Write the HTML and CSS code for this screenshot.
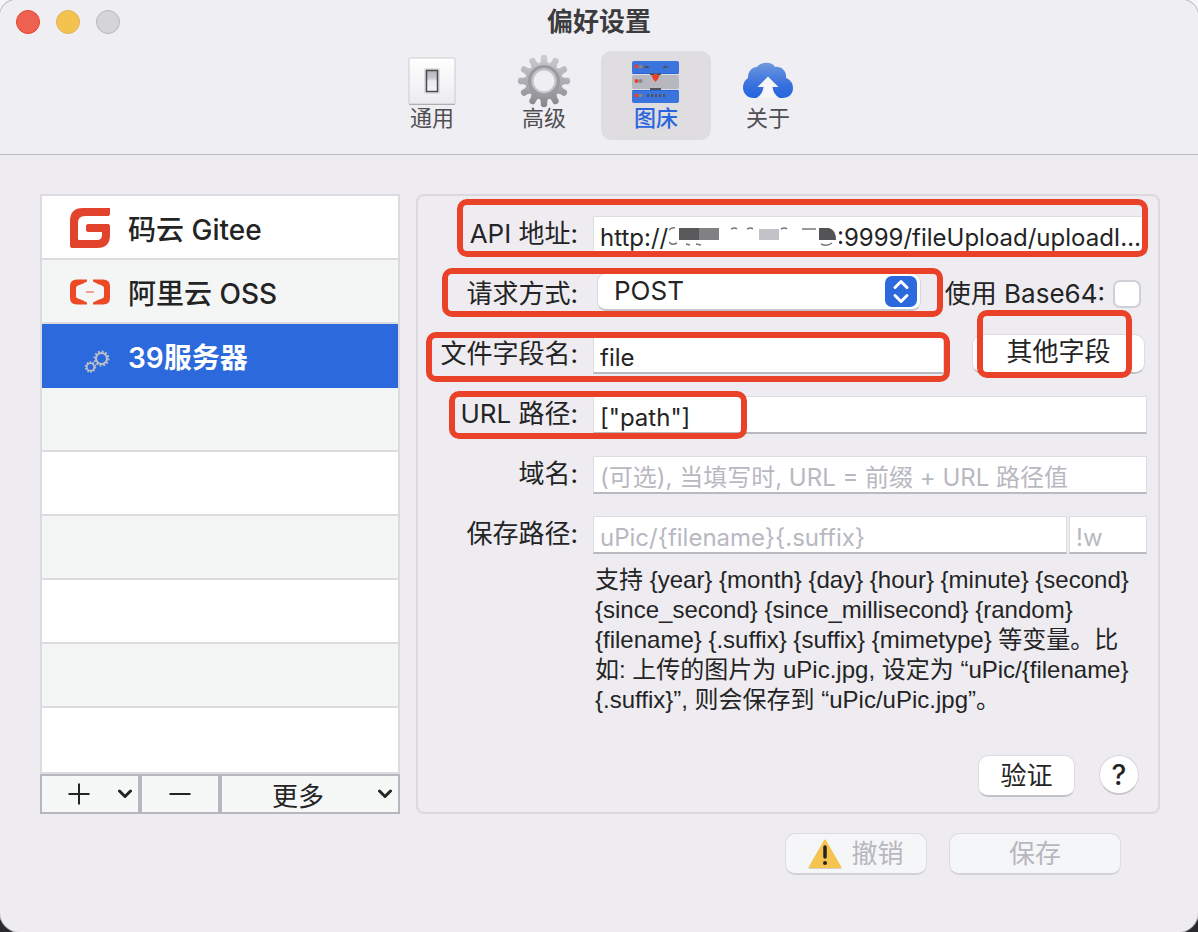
FILE: index.html
```html
<!DOCTYPE html>
<html lang="zh-CN">
<head>
<meta charset="utf-8">
<title>偏好设置</title>
<link rel="stylesheet" href="styles.css">
</head>
<body>
<div class="window">
  <header class="titlebar">
    <div class="lights">
      <button class="light light-close" aria-label="关闭"></button>
      <button class="light light-min" aria-label="最小化"></button>
      <button class="light light-zoom" aria-label="缩放" disabled></button>
    </div>
    <h1 class="title">偏好设置</h1>
    <nav class="tabs">
      <button class="tab">
        <svg class="tab-icon" viewBox="0 0 54 54">
          <defs>
            <linearGradient id="plate" x1="0" y1="0" x2="0" y2="1"><stop offset="0" stop-color="#fff"/><stop offset="1" stop-color="#ecebef"/></linearGradient>
            <linearGradient id="rocker" x1="0" y1="0" x2="0" y2="1"><stop offset="0" stop-color="#b4b5bc"/><stop offset=".35" stop-color="#c6c6cb"/><stop offset=".5" stop-color="#ecebef"/><stop offset="1" stop-color="#f4f4f6"/></linearGradient>
          </defs>
          <rect x="4" y="4" width="46" height="46" rx="1" fill="url(#plate)" stroke="#cbcacf"/>
          <path d="M4 50.500h46" stroke="#aeaeb5"/>
          <rect x="19" y="14" width="16" height="26" rx="2" fill="#dddce0"/>
          <rect x="21.500" y="16.500" width="11" height="21" fill="url(#rocker)" stroke="#4a4a4c" stroke-width="1.500"/>
        </svg>
        <span>通用</span>
      </button>
      <button class="tab">
        <svg class="tab-icon" viewBox="0 0 54 54">
          <defs>
            <linearGradient id="steel" gradientUnits="userSpaceOnUse" x1="0" y1="0" x2="0" y2="54"><stop offset="0" stop-color="#cfced3"/><stop offset=".55" stop-color="#aaaab0"/><stop offset="1" stop-color="#838387"/></linearGradient>
            <g id="teeth">
              <path id="tooth" d="M22 11 23.800 6.500V3Q24.200 .8 27 .8T30.200 3V6.500L32 11z"/>
              <use href="#tooth" transform="rotate(30 27 27)"/><use href="#tooth" transform="rotate(60 27 27)"/>
            </g>
            <mask id="gearmask">
              <g fill="#fff"><use href="#teeth"/><use href="#teeth" transform="rotate(90 27 27)"/><use href="#teeth" transform="rotate(180 27 27)"/><use href="#teeth" transform="rotate(270 27 27)"/><circle cx="27" cy="27" r="18.500"/></g>
              <circle cx="27" cy="27" r="11" fill="#000"/>
            </mask>
          </defs>
          <rect width="54" height="54" fill="url(#steel)" mask="url(#gearmask)"/>
          <circle cx="27" cy="27" r="14.500" fill="none" stroke="#9a9a9f" stroke-width="3"/>
          <circle cx="27" cy="27" r="11.500" fill="none" stroke="#c4c3c9" stroke-width="2"/>
        </svg>
        <span>高级</span>
      </button>
      <button class="tab tab-active" aria-current="page">
        <svg class="tab-icon" viewBox="0 0 54 54">
          <rect x="3" y="7" width="47" height="13" rx="2" fill="#3a74dc"/>
          <rect x="3" y="21" width="47" height="14" rx="2" fill="#b7b7c0"/>
          <rect x="3" y="36" width="47" height="13" rx="2" fill="#3a74dc"/>
          <path d="M3.500 19.500h46M3.500 36.500h46" stroke="#2965dc"/>
          <g fill="#ea4127"><circle cx="7.500" cy="12.500" r="2"/><circle cx="7.500" cy="27" r="2"/><circle cx="7.500" cy="41.500" r="2"/><path d="M22 20h9l-2 5-2.500 3-2.500-3z"/></g>
          <g fill="#858589"><circle cx="11.500" cy="12.500" r="2"/><circle cx="11.500" cy="27" r="2"/><circle cx="11.500" cy="41.500" r="2"/></g>
          <g fill="#525356"><path d="M15 13q3-2.500 5 0v1h-5zM34 13q2.500-2.500 4.500 0v1H34zM21 19h4v2h-4zM28 19h4v2h-4zM21 34h11v2H21zM18 40h2v3h-2zM22 40h2v3h-2zM26 40h2v3h-2zM30 40h2v3h-2zM34 40h2v3h-2z"/></g>
        </svg>
        <span>图床</span>
      </button>
      <button class="tab">
        <svg class="tab-icon" viewBox="0 0 54 54">
          <defs><linearGradient id="cloud" x1="0" y1="0" x2="0" y2="1"><stop offset="0" stop-color="#6f98dd"/><stop offset=".6" stop-color="#3a71dd"/><stop offset="1" stop-color="#2366e2"/></linearGradient></defs>
          <path d="M13 44C6 44 2 39 2 33.500c0-4.500 2-7.500 5-9.500C7 17 11 13 16 13c3-5 15-6 18 0 6-1 12 4 11 11 5 2 7 6 7 10 0 6-4 10-11 10z" fill="url(#cloud)"/>
          <path d="M27 22.500 37.500 33H31.500c.5 5 3 8.500 7 11H15.500c4-2.500 6.500-6 7-11H16.500z" fill="#f6f5f8"/>
        </svg>
        <span>关于</span>
      </button>
    </nav>
  </header>

  <main class="content">
    <section class="sidebar">
      <ul class="hosts">
        <li class="host">
          <svg class="host-icon" viewBox="0 0 40 40"><path d="M40 0v6.500L38.500 8H15Q8 8 8 15v16q0 1 1 1h18q5 0 5-5v-3H17.500L16 22.500v-5L17.500 16H38.500L40 17.500V27q0 13-13 13H1.500L0 38.500V13Q0 0 13 0z" fill="#e2432d"/></svg>
          <span>码云 Gitee</span>
        </li>
        <li class="host">
          <svg class="host-icon" viewBox="0 0 40 40"><path d="M17 7.500H7Q0 7.500 0 14v12q0 6.500 7 6.500h10v-2L12 28l-4-1.500Q6 26 6 24v-8q0-2 2-2.500L12 12l5-2.500zM23 7.500h10q7 0 7 6.500v12q0 6.500-7 6.500H23v-2l5-2.500 4-1.500q2-.5 2-2.500v-8q0-2-2-2.500L28 12l-5-2.500z" fill="#ec4a24"/><path d="M16 20h8" stroke="#ec8576" stroke-width="1.500"/></svg>
          <span>阿里云 OSS</span>
        </li>
        <li class="host host-selected">
          <svg class="host-icon" viewBox="0 0 40 40" fill="none" stroke="#bfc1c9"><circle cx="31.500" cy="22.500" r="5.500" stroke-width="2"/><circle cx="31.500" cy="22.500" r="7" stroke-width="2" stroke-dasharray="1.800 1.865"/><circle cx="20.500" cy="31" r="3.800" stroke-width="1.800"/><circle cx="20.500" cy="31" r="5" stroke-width="1.500" stroke-dasharray="1.600 1.542"/></svg>
          <span>39服务器</span>
        </li>
        <li class="host"></li><li class="host"></li><li class="host"></li>
        <li class="host"></li><li class="host"></li><li class="host"></li>
      </ul>
      <div class="actions">
        <button class="action action-add" aria-label="添加">
          <svg width="22" height="22" viewBox="0 0 22 22"><path d="M11 .5v21M.5 11h21" stroke="#242425" stroke-width="2"/></svg>
          <svg class="chevron" width="14" height="10" viewBox="0 0 14 10"><path d="M1.500 2 7 7.500 12.500 2" fill="none" stroke="#242425" stroke-width="3" stroke-linecap="round" stroke-linejoin="round"/></svg>
        </button>
        <button class="action action-remove" aria-label="删除">
          <svg width="22" height="22" viewBox="0 0 22 22"><path d="M.5 11h21" stroke="#242425" stroke-width="2"/></svg>
        </button>
        <button class="action action-more">
          <span>更多</span>
          <svg class="chevron" width="14" height="10" viewBox="0 0 14 10"><path d="M1.500 2 7 7.500 12.500 2" fill="none" stroke="#242425" stroke-width="3" stroke-linecap="round" stroke-linejoin="round"/></svg>
        </button>
      </div>
    </section>

    <form class="panel">
      <div class="row">
        <label class="label" for="api">API 地址:</label>
        <div class="cell">
          <input class="field" id="api" type="text" value="http://                         :9999/fileUpload/uploadI…">
          <svg class="redaction" width="170" height="22" viewBox="0 0 170 22">
            <path d="M0 1h170v19H0z" fill="#fff"/>
            <path d="M10 2h20v12H10z" fill="#59595b"/><path d="M30 2h20v12H30z" fill="#818184"/>
            <path d="M90 3h20v11H90z" fill="#c2c2c8"/>
            <path d="M150 2h10q7 2 7 12h-17z" fill="#545456"/>
            <path d="M0 4q3-3 6-2M0 16q3 4 8 1M17 18l4 1M27 18l5 1M62 3q4-2 6 0M78 3q4-2 6 0M112 3q4-2 6 0M133 3h14M152 18q6 3 11-1" fill="none" stroke="#77777a" stroke-width="1.500"/>
          </svg>
        </div>
      </div>
      <div class="row">
        <label class="label" for="method">请求方式:</label>
        <div class="cell">
          <div class="popup">
            <select class="select" id="method"><option>POST</option><option>GET</option></select>
            <svg class="stepper" width="32" height="31" viewBox="0 0 32 31"><rect width="32" height="31" rx="7" fill="#2c69dc"/><path d="m10 11.500 6-6 6 6M10 19.500l6 6 6-6" fill="none" stroke="#fff" stroke-width="3" stroke-linecap="round" stroke-linejoin="round"/></svg>
          </div>
          <label class="base-label" for="base64">使用 Base64:</label>
          <input class="check" id="base64" type="checkbox">
        </div>
      </div>
      <div class="row">
        <label class="label" for="filefield">文件字段名:</label>
        <div class="cell">
          <input class="field" id="filefield" type="text" value="file">
          <button class="button button-other" type="button">其他字段</button>
        </div>
      </div>
      <div class="row">
        <label class="label" for="urlpath">URL 路径:</label>
        <div class="cell"><input class="field" id="urlpath" type="text" value="[&quot;path&quot;]"></div>
      </div>
      <div class="row">
        <label class="label" for="domain">域名:</label>
        <div class="cell"><input class="field" id="domain" type="text" placeholder="(可选), 当填写时, URL = 前缀 + URL 路径值"></div>
      </div>
      <div class="row">
        <label class="label" for="savepath">保存路径:</label>
        <div class="cell">
          <input class="field" id="savepath" type="text" placeholder="uPic/{filename}{.suffix}">
          <input class="field field-suffix" type="text" placeholder="!w" aria-label="后缀">
        </div>
      </div>
      <p class="hint">支持 {year} {month} {day} {hour} {minute} {second}<br>{since_second} {since_millisecond} {random}<br>{filename} {.suffix} {suffix} {mimetype} 等变量。比<br>如: 上传的图片为 uPic.jpg, 设定为 “uPic/{filename}<br>{.suffix}”, 则会保存到 “uPic/uPic.jpg”。</p>
      <div class="verify">
        <button class="button button-verify" type="button">验证</button>
        <button class="help" type="button" aria-label="帮助">?</button>
      </div>
      <div class="mark mark-api"></div>
      <div class="mark mark-method"></div>
      <div class="mark mark-file"></div>
      <div class="mark mark-url"></div>
      <div class="mark mark-other"></div>
    </form>
  </main>

  <footer class="footer">
    <button class="button button-undo" disabled>
      <svg width="34" height="30" viewBox="0 0 34 30"><path d="M17 1.500 32.500 28.500h-31z" fill="#f5c44e" stroke="#f5c44e" stroke-width="2" stroke-linejoin="round"/><path d="M1 29.500h32" stroke="#d5cfc8"/><path d="M17 8v10" stroke="#242425" stroke-width="3.500" stroke-linecap="round"/><circle cx="17" cy="24" r="2" fill="#242425"/></svg>
      <span>撤销</span>
    </button>
    <button class="button button-save" disabled>保存</button>
  </footer>
</div>
</body>
</html>
```

FILE: styles.css
```css
* { box-sizing: border-box; }

body {
  margin: 0;
  background: linear-gradient(#f6f6f8 50%, #2b2b2e 50%);
  color: #242425;
  font-family: Inter, "Noto Sans CJK SC", sans-serif;
  font-size: 26px;
}

button, input, select { font: inherit; color: inherit; margin: 0; }
button { padding: 0; }

.window {
  min-height: 100vh;
  background: #eeecf1;
  border-radius: 16px 16px 20px 20px;
  box-shadow: 0 0 0 1px #b9b9c0;
}

.titlebar {
  position: relative;
  height: 155px;
  background: #efeef2;
  border-bottom: 1px solid #bcbbc2;
  border-radius: 16px 16px 0 0;
}

.lights { position: absolute; top: 10px; left: 16px; display: flex; gap: 16px; }
.light { width: 24px; height: 24px; border-radius: 50%; border: 1px solid; }
.light-close { background: #ee6150; border-color: #e8432b; }
.light-min { background: #f4c24e; border-color: #e3b15c; }
.light-zoom { background: #d5d4d9; border-color: #b7b7bf; }

.title { margin: 0; padding-top: 3px; font-size: 26px; line-height: 37px; font-weight: 700; text-align: center; color: #3c3c3e; }

.tabs { display: flex; justify-content: center; gap: 2px; padding: 11px 0 0 2px; }
.tab {
  display: flex; flex-direction: column; align-items: center;
  width: 110px; height: 89px; padding-top: 3px;
  border: 0; border-radius: 10px; background: none;
  font-size: 22px; line-height: 22px; color: #4f4f52;
}
.tab-active { background: #e0dde1; color: #2965dc; font-weight: 500; }
.tab-icon { width: 54px; height: 54px; flex: none; margin-bottom: -1px; }

.content { display: flex; gap: 16px; padding: 39px 38px 0 40px; }

.sidebar { flex: 0 0 360px; display: flex; flex-direction: column; }
.hosts { list-style: none; margin: 0; padding: 0; border: 2px solid #dddbe0; }
.host {
  display: flex; align-items: center; gap: 18px;
  height: 64px; padding: 2px 28px 0;
  background: #fff; border-bottom: 2px solid #dddbe0;
  font-size: 28px; font-weight: 500;
}
.host:nth-child(even) { background: #f4f6f6; }
.host:last-child { border-bottom: 0; }
.host-selected { background: #2c69dc; border-color: #2c69dc; color: #fff; font-weight: 600; }
.host-icon { width: 40px; height: 40px; }

.actions { display: flex; }
.action {
  display: flex; align-items: center; justify-content: center;
  height: 40px; border: 2px solid #b6b7c0; background: #f6f8f8;
}
.action-add { width: 100px; justify-content: space-between; padding: 0 6px 0 26px; }
.action-remove { width: 80px; }
.action-more { flex: 1; justify-content: space-between; padding: 0 6px 0 50px; }

.panel {
  position: relative; flex: 1; min-width: 0;
  display: flex; flex-direction: column; gap: 22px;
  padding: 20px 11px 15px 8px;
  border: 2px solid #dbd9de; border-radius: 8px;
}
.row { display: flex; gap: 15px; height: 38px; }
.label { flex: 0 0 152px; line-height: 36px; text-align: right; white-space: nowrap; }
.cell { position: relative; flex: 1; display: flex; min-width: 0; }
.field {
  flex: 1; min-width: 0; height: 38px; padding: 6px 6px 0;
  border: 1px solid #dddce0; border-bottom: 2px solid #b9b9c1; border-radius: 0;
  background: #fff; font-size: 24px; outline: 0;
}
.field::placeholder { color: #b8b8c1; opacity: 1; }
.field-suffix { flex: 0 0 78px; margin-left: 2px; }
.redaction { position: absolute; left: 76px; top: 10px; }

.popup { position: relative; flex: 1; margin: -3px 24px 0 4px; height: 38px; }
.select {
  appearance: none; width: 100%; height: 38px; padding: 0 40px 2px 16px;
  border: 1px solid #d9d8dd; border-bottom: 2px solid #c6c5cb; border-radius: 9px; background: #fff;
}
.stepper { position: absolute; right: 4px; top: 3px; }
.base-label { line-height: 36px; white-space: nowrap; }
.check {
  appearance: none; width: 28px; height: 28px; margin: 4px 6px 0 8px;
  border: 2px solid #d0cfd5; border-radius: 7px; background: #fff;
}

.button {
  border: 1px solid #dddbe0; border-bottom: 2px solid #c3c2c9; border-radius: 10px;
  background: #fff; line-height: 34px;
}
.button-other { width: 173px; margin: -2px 2px 0 28px; height: 40px; padding-bottom: 4px; }
.button-verify { width: 97px; height: 42px; }

.hint {
  margin: -11px 0 0 169px; font-size: 24px; line-height: 30px; white-space: nowrap;
  font-family: "Liberation Sans", "Noto Sans CJK SC", sans-serif;
}
.verify { display: flex; justify-content: flex-end; gap: 24px; margin-top: auto; padding-right: 8px; }
.help {
  width: 40px; height: 40px; border: 1px solid #d6d5da; border-bottom: 2px solid #c9c8ce;
  border-radius: 50%; background: #fff; font-size: 28px; line-height: 36px; font-weight: 500;
}

.mark { position: absolute; border: 6px solid #ea4229; border-radius: 10px; pointer-events: none; }
.mark-api { left: 39px; right: 10px; top: 3px; height: 58px; }
.mark-method { left: 24px; right: 215px; top: 72px; height: 49px; }
.mark-file { left: 8px; right: 208px; top: 136px; height: 50px; }
.mark-url { left: 31px; width: 298px; top: 195px; height: 48px; }
.mark-other { width: 155px; right: 26px; top: 114px; height: 68px; }

.footer { display: flex; justify-content: flex-end; gap: 22px; padding: 19px 77px 0 40px; }
.footer .button { height: 42px; background: #f5f6f7; border-bottom: 2px solid #d3d2d7; color: #b7b7c0; }
.button-undo { display: flex; align-items: center; justify-content: center; gap: 9px; width: 142px; }
.button-save { width: 172px; }
```
